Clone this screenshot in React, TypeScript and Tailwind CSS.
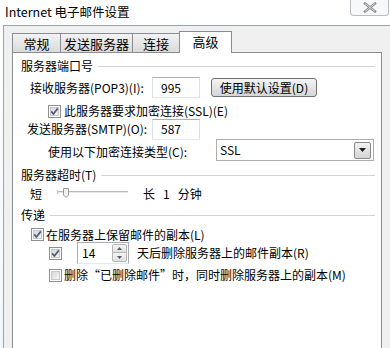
import React from "react";

function Check({ checked }: { checked: boolean }) {
  return (
    <span className="relative flex h-[13px] w-[13px] shrink-0 items-center justify-center border border-[#8e8f8f] bg-white">
      <span className="absolute inset-[1px] border border-[#c9c9c9] bg-linear-to-br from-[#d6d6d6] to-[#f7f7f7]" />
      {checked && (
        <svg className="relative" width="9" height="9" viewBox="0 0 9 9">
          <path d="M1.2 4.4 L3.4 7 L7.8 1.4" fill="none" stroke="#4b5b80" strokeWidth="1.7" />
        </svg>
      )}
    </span>
  );
}

function GroupHeader({ label, mt }: { label: string; mt: string }) {
  return (
    <div className={`flex h-[18px] items-center pl-[8px] pr-[6px] ${mt}`}>
      <span className="whitespace-nowrap">{label}</span>
      <span className="ml-[5px] h-px flex-1 bg-[#d2d2d2]" />
    </div>
  );
}

function TextBox({ value, w }: { value: string; w: string }) {
  return (
    <div className={`flex h-[21px] items-center border border-[#abadb3] border-l-[#dbdfe6] border-r-[#dbdfe6] border-b-[#e3e9ef] bg-white pl-[8px] ${w}`}>
      {value}
    </div>
  );
}

export default function App() {
  return (
    <div className="relative h-[348px] w-[390px] overflow-hidden bg-linear-to-b from-white to-[#f2f7fc] font-['Noto_Sans_CJK_SC','Noto_Sans',sans-serif] text-[12px] leading-none text-black">
      {/* title bar */}
      <div className="flex h-[25px] items-start justify-between">
        <div className="flex h-[24px] items-center pl-[5px] text-[12.5px]">Internet 电子邮件设置</div>
        <div className="mr-[1px] flex h-[16px] w-[39px] items-center justify-center rounded-b-[4px] border border-t-0 border-[#b8bcc2] bg-[#f6f8fa]">
          <svg width="14" height="11" viewBox="0 0 14 11">
            <path d="M2 1.5 L12 9.5 M12 1.5 L2 9.5" stroke="#8a8a8a" strokeWidth="2.4" strokeLinecap="square" />
            <path d="M2 1.5 L12 9.5 M12 1.5 L2 9.5" stroke="#e2e2e2" strokeWidth="0.9" />
          </svg>
        </div>
      </div>

      {/* client area */}
      <div className="ml-[3px] h-[323px] border-l border-t border-[#9ba3ad] bg-[#f0f0f0] pl-[8px] pr-[8px] pt-[5px]">
        {/* tabs */}
        <div className="relative z-10 -mb-px flex h-[22px] items-end text-[13px]">
          <div className="flex h-[20px] w-[49px] items-center justify-center border border-[#898c95] bg-linear-to-b from-[#f3f3f3] to-[#dadada] pt-[1px]">常规</div>
          <div className="-ml-px flex h-[20px] w-[73px] items-center justify-center border border-[#898c95] bg-linear-to-b from-[#f3f3f3] to-[#dadada] pt-[1px]">发送服务器</div>
          <div className="-ml-px flex h-[20px] w-[48px] items-center justify-center border border-[#898c95] bg-linear-to-b from-[#f3f3f3] to-[#dadada] pt-[1px]">连接</div>
          <div className="-ml-px flex h-[22px] w-[53px] items-center justify-center border border-b-0 border-[#898c95] bg-white pb-[2px]">高级</div>
        </div>

        {/* panel */}
        <div className="flex h-[320px] flex-col border border-[#898c95] bg-white">
          <GroupHeader label="服务器端口号" mt="mt-[4px]" />

          <div className="mt-[2px] flex h-[21px] items-center pl-[17px]">
            <span className="w-[122px] whitespace-nowrap">接收服务器(POP3)(I):</span>
            <TextBox value="995" w="w-[48px]" />
            <div className="ml-[11px] flex h-[19px] w-[106px] items-center justify-center rounded-[3px] border border-[#707070] bg-linear-to-b from-[#f4f4f4] to-[#d6d6d6]">
              使用默认设置(D)
            </div>
          </div>

          <div className="mt-[5px] flex h-[16px] items-center pl-[35px]">
            <Check checked />
            <span className="ml-[3px]">此服务器要求加密连接(SSL)(E)</span>
          </div>

          <div className="flex h-[20px] items-center pl-[14px]">
            <span className="w-[125px] whitespace-nowrap">发送服务器(SMTP)(O):</span>
            <TextBox value="587" w="w-[48px]" />
          </div>

          <div className="flex h-[22px] items-center pl-[35px]">
            <span className="w-[168px] whitespace-nowrap pt-[3px]">使用以下加密连接类型(C):</span>
            <div className="flex h-[22px] w-[158px] items-center justify-between border border-[#abadb3] bg-white pl-[3px] pr-[2px]">
              <span>SSL</span>
              <div className="flex h-[17px] w-[17px] items-center justify-center rounded-[2px] border border-[#8a8a8a] bg-linear-to-b from-[#f2f2f2] to-[#d4d4d4]">
                <svg width="7" height="4" viewBox="0 0 7 4">
                  <path d="M0 0 L7 0 L3.5 4 Z" fill="#1e1e1e" />
                </svg>
              </div>
            </div>
          </div>

          <GroupHeader label="服务器超时(T)" mt="mt-[5px]" />

          <div className="mt-[1px] flex h-[18px] items-center pl-[17px]">
            <span>短</span>
            <svg className="ml-[15px]" width="72" height="14" viewBox="0 0 72 14">
              <line x1="1" y1="4.5" x2="71" y2="4.5" stroke="#b9b9b9" strokeWidth="1" />
              <line x1="1" y1="5.5" x2="71" y2="5.5" stroke="#e6e6e6" strokeWidth="1" />
              <line x1="0.5" y1="3" x2="0.5" y2="7" stroke="#c8c8c8" strokeWidth="1" />
              <path d="M6.5 1.5 L11.5 1.5 L11.5 8 L9 10.5 L6.5 8 Z" fill="#f1f1f1" stroke="#9a9a9a" strokeWidth="1" />
            </svg>
            <span className="ml-[14px]">长</span>
            <span className="ml-[8px]">1</span>
            <span className="ml-[8px]">分钟</span>
          </div>

          <GroupHeader label="传递" mt="mt-[3px]" />

          <div className="mt-[3px] flex h-[15px] items-center pl-[18px]">
            <Check checked />
            <span className="ml-[2px]">在服务器上保留邮件的副本(L)</span>
          </div>

          <div className="flex h-[22px] items-center pl-[36px]">
            <Check checked />
            <div className="ml-[15px] flex h-[22px] w-[52px] items-center justify-between border border-[#abadb3] border-b-[#e3e9ef] bg-white pl-[4px] pr-[1px]">
              <span>14</span>
              <div className="flex h-[18px] w-[15px] flex-col">
                <div className="flex h-[9px] items-center justify-center rounded-t-[2px] border border-[#b5b5b5] bg-linear-to-b from-[#f5f5f5] to-[#e0e0e0]">
                  <svg width="5" height="3" viewBox="0 0 5 3"><path d="M0 3 L5 3 L2.5 0 Z" fill="#5a5a5a" /></svg>
                </div>
                <div className="-mt-px flex h-[10px] items-center justify-center rounded-b-[2px] border border-[#b5b5b5] bg-linear-to-b from-[#f5f5f5] to-[#e0e0e0]">
                  <svg width="5" height="3" viewBox="0 0 5 3"><path d="M0 0 L5 0 L2.5 3 Z" fill="#5a5a5a" /></svg>
                </div>
              </div>
            </div>
            <span className="ml-[8px]">天后删除服务器上的邮件副本(R)</span>
          </div>

          <div className="mt-[3px] flex h-[16px] items-center pl-[36px]">
            <Check checked={false} />
            <span className="ml-[2px] whitespace-nowrap">删除“已删除邮件”时，同时删除服务器上的副本(M)</span>
          </div>
        </div>
      </div>
    </div>
  );
}
